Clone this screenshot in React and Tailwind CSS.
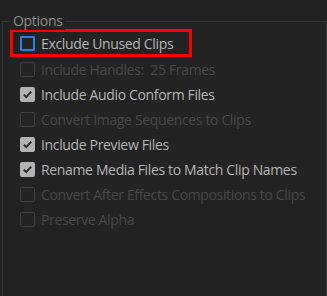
import React from "react";

const rows = [
  { label: "Include Handles:  25 Frames", checked: false, disabled: true },
  { label: "Include Audio Conform Files", checked: true, disabled: false },
  { label: "Convert Image Sequences to Clips", checked: false, disabled: true },
  { label: "Include Preview Files", checked: true, disabled: false },
  { label: "Rename Media Files to Match Clip Names", checked: true, disabled: false },
  { label: "Convert After Effects Compositions to Clips", checked: false, disabled: true },
  { label: "Preserve Alpha", checked: false, disabled: true },
];

function Box({ checked, focus }) {
  if (focus) {
    return <div className="w-[15px] h-[15px] shrink-0 border-2 border-[#2680eb] rounded-[1px]" />;
  }
  if (checked) {
    return (
      <div className="w-[15px] h-[15px] shrink-0 bg-[#b3b3b3] rounded-[2px] flex items-center justify-center">
        <svg width="11" height="11" viewBox="0 0 11 11">
          <path d="M1.8 5.6 L4.3 8.1 L9.2 2.6" fill="none" stroke="#2a2a2a" strokeWidth="2" />
        </svg>
      </div>
    );
  }
  return <div className="w-[15px] h-[15px] shrink-0 border border-[#3e3e3e] rounded-[2px]" />;
}

export default function App() {
  return (
    <div
      className="w-[327px] h-[296px] bg-[#232323] pt-[21px] pl-[2px] overflow-hidden"
      style={{ fontFamily: '"Open Sans", sans-serif' }}
    >
      <div className="relative w-[325px] h-[280px] border border-b-0 border-[#363636]">
        <span className="absolute -top-[10px] left-[8px] px-[2px] bg-[#232323] text-[14px] leading-[18px] tracking-[-0.3px] text-[#8c8c8c]">
          Options
        </span>
        <div className="ml-[7px] mt-[7px] w-[182px] h-[28px] border-[3px] border-[#ff0000] flex items-center pl-[7px] gap-[6px]">
          <Box focus />
          <span className="text-[14px] tracking-[-0.35px] text-[#b5b5b5] whitespace-nowrap">Exclude Unused Clips</span>
        </div>
        <div className="flex flex-col">
          {rows.map((r) => (
            <div key={r.label} className="h-[25px] flex items-center pl-[17px] gap-[6px]">
              <Box checked={r.checked} />
              <span
                className={
                  "text-[14px] tracking-[-0.35px] whitespace-pre " +
                  (r.disabled ? "text-[#474747]" : "text-[#b5b5b5]")
                }
              >
                {r.label}
              </span>
            </div>
          ))}
        </div>
      </div>
    </div>
  );
}
